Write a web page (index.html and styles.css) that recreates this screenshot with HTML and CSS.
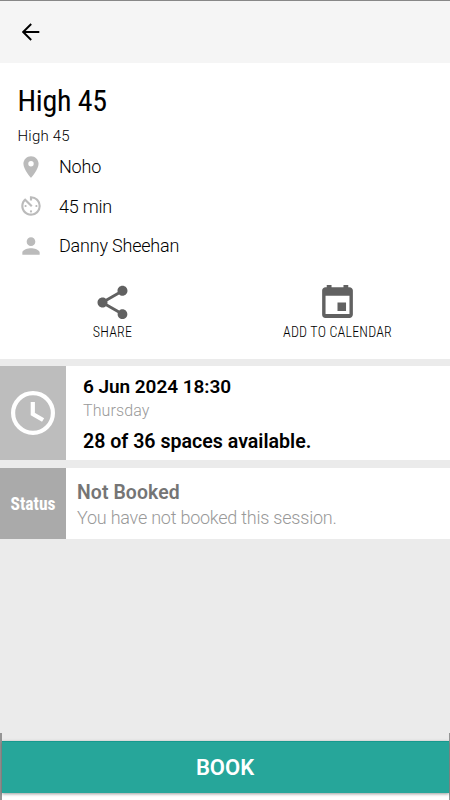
FILE: index.html
```html
<!DOCTYPE html>
<html lang="en">
<head>
<meta charset="utf-8">
<meta name="viewport" content="width=device-width, initial-scale=1">
<title>High 45</title>
<link rel="stylesheet" href="styles.css">
</head>
<body>
<header class="topbar">
  <svg class="back" viewBox="0 0 18 18"><path d="M17.3 9H1.2M9.2 1 1.2 9l8 8"/></svg>
</header>
<section class="details">
  <h1 class="title condensed">High 45</h1>
  <p class="subtitle">High 45</p>
  <ul class="facts">
    <li><svg viewBox="0 0 24 24"><path d="M12 2C8.13 2 5 5.13 5 9c0 5.25 7 13 7 13s7-7.75 7-13c0-3.87-3.13-7-7-7zm0 9.5a2.5 2.5 0 0 1 0-5 2.5 2.5 0 0 1 0 5z"/></svg><span>Noho</span></li>
    <li><svg viewBox="0 0 24 24"><path d="M11 17c0 .55.45 1 1 1s1-.45 1-1-.45-1-1-1-1 .45-1 1zm0-14v4h2V5.08c3.39.49 6 3.39 6 6.92 0 3.87-3.13 7-7 7s-7-3.13-7-7c0-1.68.59-3.22 1.58-4.42L12 13l1.41-1.41-6.8-6.8v.02C4.42 6.45 3 9.05 3 12c0 4.97 4.02 9 9 9a9 9 0 0 0 0-18h-1zm7 9c0-.55-.45-1-1-1s-1 .45-1 1 .45 1 1 1 1-.45 1-1zM6 12c0 .55.45 1 1 1s1-.45 1-1-.45-1-1-1-1 .45-1 1z"/></svg><span>45 min</span></li>
    <li><svg viewBox="0 0 24 24"><path d="M12 12c2.21 0 4-1.79 4-4s-1.79-4-4-4-4 1.79-4 4 1.79 4 4 4zm0 2c-2.67 0-8 1.34-8 4v2h16v-2c0-2.66-5.33-4-8-4z"/></svg><span>Danny Sheehan</span></li>
  </ul>
  <div class="actions">
    <div class="action">
      <svg viewBox="0.3 0.3 23.4 23.4"><path d="M18 16.08c-.76 0-1.44.3-1.96.77L8.91 12.7c.05-.23.09-.46.09-.7s-.04-.47-.09-.7l7.05-4.11c.54.5 1.25.81 2.04.81 1.66 0 3-1.34 3-3s-1.34-3-3-3-3 1.34-3 3c0 .24.04.47.09.7L8.04 9.81C7.5 9.31 6.79 9 6 9c-1.66 0-3 1.34-3 3s1.34 3 3 3c.79 0 1.5-.31 2.04-.81l7.12 4.16c-.05.21-.08.43-.08.65 0 1.61 1.31 2.92 2.92 2.92s2.92-1.31 2.92-2.92-1.31-2.92-2.92-2.92z" transform="translate(.6 .6) scale(.95)"/></svg>
      <span class="condensed">SHARE</span>
    </div>
    <div class="action">
      <svg viewBox="0 0 24 24"><path d="M17 12h-5v5h5v-5zM15.5 1.7v1.3h-7V1.7H5.7V3H5c-1.11 0-1.99.9-1.99 2L3 19a2 2 0 0 0 2 2h14c1.1 0 2-.9 2-2V5c0-1.1-.9-2-2-2h-.7V1.7h-2.8zm3.5 17.1H5V8h14v10.8z"/></svg>
      <span class="condensed">ADD TO CALENDAR</span>
    </div>
  </div>
</section>
<section class="row time">
  <div class="badge"><svg viewBox="0 0 44 44"><circle cx="22" cy="22" r="19.9"/><path d="M21.8 11v12l10.3 6"/></svg></div>
  <div class="info">
    <p class="strong date">6 Jun 2024 18:30</p>
    <p class="day">Thursday</p>
    <p class="strong spaces">28 of 36 spaces available.</p>
  </div>
</section>
<section class="row status">
  <div class="badge"><span class="condensed">Status</span></div>
  <div class="info">
    <p class="strong state">Not Booked</p>
    <p class="note">You have not booked this session.</p>
  </div>
</section>
<footer class="footer"><button class="book">BOOK</button></footer>
</body>
</html>
```
FILE: styles.css
```css
* { box-sizing: border-box; margin: 0; padding: 0; }
body { height: 800px; display: flex; flex-direction: column; background: #ebebeb; color: #000; font-family: Roboto, sans-serif; overflow: hidden; }
svg { display: block; flex: none; }
p, span { white-space: nowrap; }
.condensed { font-stretch: 75%; }
.topbar { height: 63px; flex: none; border-top: 1px solid #888; background: #f5f5f5; padding: 22px 0 0 22px; }
.back { width: 18px; height: 18px; fill: none; stroke: #000; stroke-width: 1.9; }
.details { height: 296px; flex: none; background: #fff; padding-top: 20px; }
.title { font-size: 30px; font-weight: 400; line-height: 36px; letter-spacing: -.3px; padding-left: 17.5px; }
.subtitle { font-size: 15px; font-weight: 350; line-height: 20px; letter-spacing: .2px; margin-top: 7px; padding-left: 17.5px; }
.facts { list-style: none; margin-top: 1px; padding-left: 18px; }
.facts li { height: 39.5px; display: flex; align-items: center; gap: 15px; font-size: 18px; font-weight: 300; letter-spacing: -.2px; }
.facts svg { width: 26px; height: 26px; fill: #bbb; }
.actions { display: grid; grid-template-columns: 1fr 1fr; margin-top: 16px; }
.action { display: flex; flex-direction: column; align-items: center; }
.action svg { width: 41px; height: 41px; fill: #616161; }
.action span { font-size: 14px; font-weight: 350; line-height: 20px; letter-spacing: .2px; margin-top: -1px; }
.row { display: flex; flex: none; margin-top: 7px; background: #fff; }
.badge { width: 66px; display: flex; align-items: center; justify-content: center; color: #fff; }
.time { height: 94px; }
.time .badge { background: #bdbdbd; }
.time .badge svg { width: 44px; height: 44px; fill: none; stroke: #fff; stroke-width: 4.2; }
.time .info { padding: 9px 0 0 17px; }
.strong { font-size: 19.6px; font-weight: 600; line-height: 24px; }
.date { font-size: 19px; letter-spacing: -.05px; }
.day { font-size: 16px; font-weight: 300; line-height: 23px; letter-spacing: .12px; color: #999; }
.spaces { margin-top: 8px; }
.status { height: 71px; margin-top: 8px; }
.status .badge { background: #aaa; font-size: 17.5px; font-weight: 700; }
.status .info { padding: 13px 0 0 11px; }
.state { font-size: 19.4px; letter-spacing: .1px; color: #757575; }
.note { font-size: 18px; font-weight: 300; line-height: 25px; letter-spacing: -.23px; color: #999; }
.footer { margin-top: auto; height: 67px; flex: none; border: solid #959595; border-width: 0 1px 0 2px; padding-top: 8px; background: linear-gradient(#ebebeb 8px, #fff 8px); }
.book { display: block; width: 100%; height: 52px; border: 0; border-top: 1px solid #17998e; padding-right: 1px; background: #26a69a; color: #fff; font: 600 22px/52px Roboto, sans-serif; box-shadow: 0 1px 3px #0006; }
```
